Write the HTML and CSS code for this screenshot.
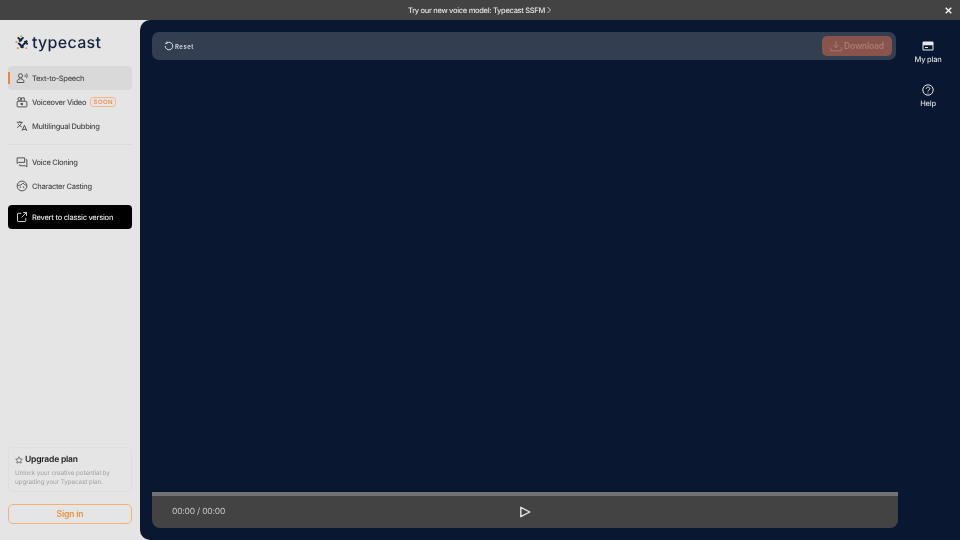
FILE: index.html
```html
<!DOCTYPE html>
<html lang="en">
<head>
<meta charset="utf-8">
<title>Typecast</title>
<link rel="stylesheet" href="styles.css">
</head>
<body>
<div class="banner">
  <span class="banner-text">Try our new voice model: Typecast SSFM</span>
  <svg class="banner-chev" viewBox="0 0 8 10" width="6" height="8"><path d="M2 1l4 4-4 4" fill="none" stroke="#e2e2e2" stroke-width="1.1"/></svg>
  <svg class="banner-close" viewBox="0 0 10 10" width="7" height="7"><path d="M1 1l8 8M9 1l-8 8" stroke="#fff" stroke-width="1.8"/></svg>
</div>
<div class="app">
  <aside class="sidebar">
    <div class="logo">
      <svg viewBox="0 0 16 16" width="15" height="15" class="logo-mark">
        <path d="M3 2.500l4 4M6 13.500l7-7.500M3.500 8.500l5.500 5M9 2.500L4.500 7M10 6.500l3.500 3.500" fill="none" stroke="#14233f" stroke-width="2.100"/>
        <circle cx="1.500" cy="7.500" r="1.100" fill="#f58235"/><circle cx="6.500" cy="1.200" r="1" fill="#f58235"/><circle cx="3" cy="14" r="1.100" fill="#f58235"/><circle cx="12" cy="14" r="1" fill="#f58235"/>
      </svg>
      <span class="logo-text">typecast</span>
    </div>
    <nav class="nav">
      <a class="nav-item active">
        <svg class="ico" viewBox="0 0 16 16"><circle cx="6" cy="5" r="2.700"/><path d="M1.500 14v-1.500c0-2 2-3.500 4.500-3.500s4.500 1.500 4.500 3.500V14zM12 3.500c.6.800.6 2.200 0 3M14 2c1.200 1.700 1.200 4.300 0 6"/></svg>
        <span>Text-to-Speech</span>
      </a>
      <a class="nav-item">
        <svg class="ico" viewBox="0 0 16 16"><rect x="1.500" y="7" width="13" height="7.500" rx="1"/><circle cx="4.500" cy="4" r="2"/><path d="M7 6.500V2.500h4v4M6 10.500l2.500-1v2.500z"/></svg>
        <span>Voiceover Video</span>
        <span class="soon">SOON</span>
      </a>
      <a class="nav-item">
        <svg class="ico" viewBox="0 0 16 16"><path d="M1 3h8M5 1.500V3M7.500 3C7 6 4.500 8.500 1.500 10M2.800 5c1 2 2.800 3.500 5 4.300M8 14.500L11.200 7l3.300 7.500M9 12.500h4.500"/></svg>
        <span>Multilingual Dubbing</span>
      </a>
      <div class="nav-divider"></div>
      <a class="nav-item">
        <svg class="ico" viewBox="0 0 16 16"><path d="M11.500 8.500H3.500L1.500 10V2.500h10zM13 5h1.500v9.500L12.500 13H5v-2"/></svg>
        <span>Voice Cloning</span>
      </a>
      <a class="nav-item">
        <svg class="ico" viewBox="0 0 16 16"><circle cx="8" cy="8" r="6.500"/><path d="M2 7c3 .5 6-.5 7.500-3 .8 1.500 2.500 2.800 4.500 3"/><circle cx="5.800" cy="9.500" r=".5"/><circle cx="10.200" cy="9.500" r=".5"/></svg>
        <span>Character Casting</span>
      </a>
      <a class="revert">
        <svg class="ico ico-light" viewBox="0 0 16 16"><path d="M7 3H3a1 1 0 00-1 1v9a1 1 0 001 1h9a1 1 0 001-1V9.500M9.500 2H14v4.500M14 2L7.500 8.500"/></svg>
        <span>Revert to classic version</span>
      </a>
    </nav>
    <div class="side-bottom">
      <div class="upgrade">
        <div class="upgrade-title">
          <svg viewBox="0 0 16 16" width="8" height="8" class="star"><path d="M8 1.500l2 4.300 4.700.6-3.400 3.200.9 4.700L8 12l-4.200 2.300.9-4.700L1.300 6.400 6 5.800z"/></svg>
          <span>Upgrade plan</span>
        </div>
        <p class="upgrade-copy">Unlock your creative potential by upgrading your Typecast plan.</p>
      </div>
      <button class="signin">Sign in</button>
    </div>
  </aside>
  <main class="main">
    <section class="workspace">
      <div class="toolbar">
        <button class="reset">
          <svg viewBox="0 0 16 16" width="10" height="10"><path d="M4.500 3.200A6 6 0 112 8M4.800 0.800v3H1.800" fill="none" stroke="#e6e8ec" stroke-width="1.500"/></svg>
          <span>Reset</span>
        </button>
        <button class="download">
          <svg viewBox="0 0 16 16" width="12" height="12"><path d="M8 1.500v8.500M4.800 7L8 10.200 11.200 7M1 10v4.500h14V10" fill="none" stroke="#a87d74" stroke-width="1.300"/></svg>
          <span>Download</span>
        </button>
      </div>
      <div class="canvas"></div>
      <div class="player">
        <div class="progress"></div>
        <div class="player-body">
          <span class="time">00:00 / 00:00</span>
          <svg class="play" viewBox="0 0 12 12" width="12" height="12"><path d="M1.800 1.300L10.800 6 1.800 10.700z" fill="none" stroke="#e4e4e4" stroke-width="1.400" stroke-linejoin="round"/></svg>
        </div>
      </div>
    </section>
    <aside class="rail">
      <a class="rail-item">
        <svg viewBox="0 0 12 12" width="12" height="12"><path fill="#e8eaee" fill-rule="evenodd" d="M1.500 1.500h9a1 1 0 011 1v7a1 1 0 01-1 1h-9a1 1 0 01-1-1v-7a1 1 0 011-1zM1.500 5.200v4.300h9V5.200zM3 7h3v1H3z"/></svg>
        <span>My plan</span>
      </a>
      <a class="rail-item">
        <svg viewBox="0 0 12 12" width="12" height="12"><circle cx="6" cy="6" r="5.200" fill="none" stroke="#e8eaee"/><path d="M4.300 4.700C4.300 2.600 7.800 2.700 7.800 4.700 7.800 6 6 6 6 7.400" fill="none" stroke="#e8eaee"/><circle cx="6" cy="9" r=".6" fill="#e8eaee"/></svg>
        <span>Help</span>
      </a>
    </aside>
  </main>
</div>
</body>
</html>
```
FILE: styles.css
```css
* { box-sizing: border-box; }
html, body { margin: 0; height: 100%; overflow: hidden; }
body {
  display: flex;
  flex-direction: column;
  width: 960px;
  height: 540px;
  background: #e5e5e5;
  font-family: Inter, "Liberation Sans", sans-serif;
  text-rendering: geometricPrecision;
  will-change: transform;
}
svg { flex: none; display: block; }
.banner {
  position: relative;
  flex: none;
  height: 20px;
  background: #434343;
  display: flex;
  align-items: center;
  justify-content: center;
  gap: 1px;
  color: #e4e4e4;
  font-size: 7.500px;
  font-weight: 500;
  letter-spacing: -.3px;
}
.banner-close { position: absolute; right: 8px; top: 7px; }
.app { flex: 1; display: flex; min-height: 0; }
.sidebar {
  width: 140px;
  flex: none;
  padding: 0 8px 16px;
  display: flex;
  flex-direction: column;
}
.logo {
  height: 44px;
  margin-bottom: 2px;
  display: flex;
  align-items: center;
  padding-left: 7px;
  gap: 2px;
}
.logo-text {
  font-size: 16px;
  font-weight: 500;
  letter-spacing: .3px;
  color: #14233f;
  line-height: 1;
}
.nav { display: flex; flex-direction: column; }
.nav-item {
  position: relative;
  height: 24px;
  display: flex;
  align-items: center;
  gap: 4px;
  padding-left: 8px;
  border-radius: 4px;
  color: #4a4a4a;
  font-size: 7.500px;
  font-weight: 500;
  letter-spacing: -.3px;
}
.nav-item.active { background: #d9d9d9; }
.nav-item.active::before {
  content: "";
  position: absolute;
  left: 0;
  top: 6px;
  width: 2px;
  height: 12px;
  background: #f58235;
}
.ico {
  width: 12px;
  height: 12px;
  fill: none;
  stroke: #444;
  stroke-width: 1.200;
}
.ico-light { stroke: #e6e6e6; }
.soon {
  height: 10px;
  width: 26px;
  border: 1px solid #f7b58a;
  border-radius: 3px;
  color: #f58b45;
  font-size: 6px;
  font-weight: 600;
  letter-spacing: .4px;
  display: flex;
  align-items: center;
  justify-content: center;
}
.nav-divider { height: 1px; background: #dcdcdc; margin: 6px 0 5px; }
.revert {
  height: 24px;
  margin-top: 7px;
  background: #000;
  border-radius: 4px;
  color: #e4e4e4;
  display: flex;
  align-items: center;
  gap: 4px;
  padding-left: 8px;
  font-size: 7.500px;
  font-weight: 500;
  letter-spacing: -.25px;
}
.side-bottom { margin-top: auto; display: flex; flex-direction: column; gap: 12px; }
.upgrade {
  height: 45px;
  border: 1px solid #dfdfdf;
  border-radius: 4px;
  padding: 6px 6px 0;
}
.upgrade-title {
  display: flex;
  align-items: center;
  gap: 2px;
  font-size: 8.500px;
  font-weight: 600;
  color: #1a1a1a;
  line-height: 12px;
  letter-spacing: -.2px;
}
.star { fill: none; stroke: #444; stroke-width: 1.300; }
.upgrade-copy {
  margin: 3px 0 0;
  font-size: 6.300px;
  line-height: 9px;
  color: #a3a3a3;
  font-weight: 400;
  letter-spacing: -.1px;
}
.signin {
  height: 20px;
  padding: 0;
  background: transparent;
  border: 1px solid #eeb277;
  border-radius: 5px;
  color: #e8913f;
  font-family: inherit;
  font-size: 8.500px;
  font-weight: 600;
  letter-spacing: -.15px;
}
.main {
  flex: 1;
  display: flex;
  background: #0a1730;
  border-radius: 10px 0 0 10px;
  padding: 12px 0 12px 12px;
  min-width: 0;
}
.workspace {
  width: 746px;
  flex: none;
  display: flex;
  flex-direction: column;
}
.toolbar {
  height: 28px;
  width: 744px;
  flex: none;
  background: #333e50;
  border-radius: 7px;
  display: flex;
  align-items: center;
  justify-content: space-between;
  padding: 0 4px 0 12px;
}
.reset {
  display: flex;
  align-items: center;
  gap: 1px;
  padding: 0;
  background: none;
  border: 0;
  color: #d6d9de;
  font-family: inherit;
  font-size: 6px;
  font-weight: 600;
  letter-spacing: .5px;
}
.download {
  width: 70px;
  height: 20px;
  padding: 0;
  border: 0;
  border-radius: 5px;
  background: #88544b;
  color: #a87d74;
  font-family: inherit;
  font-size: 8.500px;
  font-weight: 600;
  letter-spacing: -.15px;
  display: flex;
  align-items: center;
  justify-content: center;
  gap: 2px;
}
.canvas { flex: 1; }
.player { height: 36px; flex: none; }
.progress { height: 4px; background: #737373; }
.player-body {
  position: relative;
  height: 32px;
  background: #434343;
  border-radius: 0 0 8px 8px;
  display: flex;
  align-items: center;
  justify-content: center;
}
.time {
  position: absolute;
  left: 20px;
  top: 10px;
  color: #c8c8c8;
  font-size: 8.500px;
  line-height: 12px;
  letter-spacing: -.2px;
}
.rail {
  flex: 1;
  display: flex;
  flex-direction: column;
  gap: 16px;
  padding: 8px 2px 0 0;
  align-items: center;
}
.rail-item {
  height: 28px;
  display: flex;
  flex-direction: column;
  align-items: center;
  gap: 2px;
  color: #d9dce2;
  font-size: 7.500px;
  font-weight: 500;
  letter-spacing: -.2px;
  line-height: 11px;
}
```
